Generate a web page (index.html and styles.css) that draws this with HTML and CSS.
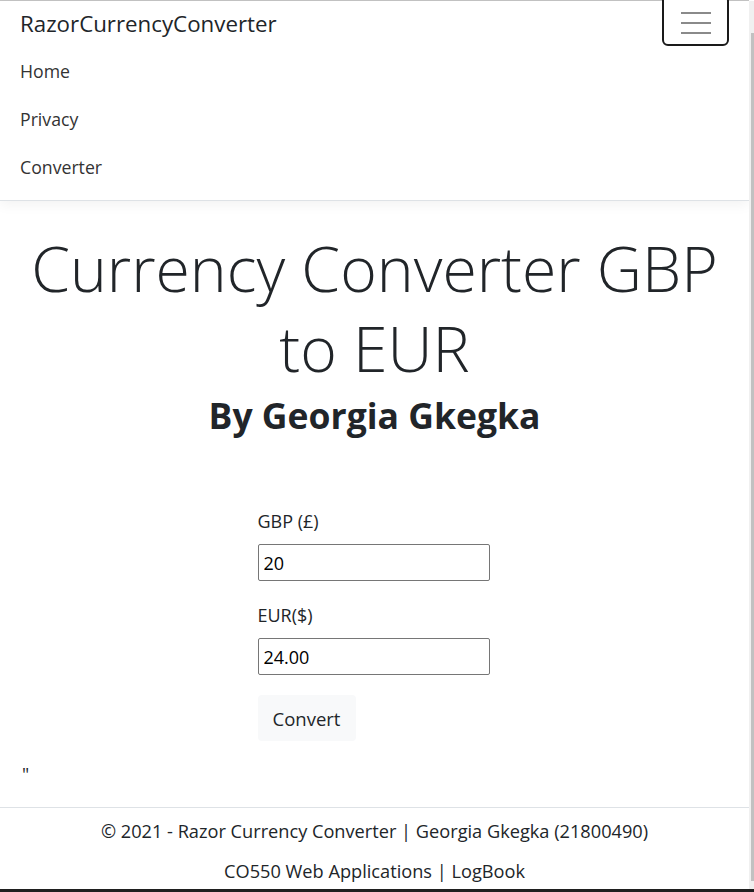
FILE: index.html
```html
<!DOCTYPE html>
<html lang="en">
<head>
<meta charset="utf-8">
<title>RazorCurrencyConverter</title>
<link rel="stylesheet" href="styles.css">
</head>
<body>
<div class="app">
  <header class="navbar">
    <div class="navbar-top">
      <a class="brand" href="#">RazorCurrencyConverter</a>
      <button class="toggler" type="button" aria-label="Toggle navigation">
        <svg width="30" height="24" viewBox="0 0 30 24"><path d="M0 2h30M0 12h30M0 22h30" stroke="#8a8a8a" stroke-width="2"/></svg>
      </button>
    </div>
    <nav class="nav">
      <a class="nav-link" href="#">Home</a>
      <a class="nav-link" href="#">Privacy</a>
      <a class="nav-link" href="#">Converter</a>
    </nav>
  </header>

  <main class="main">
    <h1 class="title">Currency Converter GBP to EUR</h1>
    <h2 class="subtitle">By Georgia Gkegka</h2>

    <form class="form">
      <label class="label" for="gbp">GBP (£)</label>
      <input class="input" id="gbp" type="text" value="20">
      <label class="label" for="eur">EUR($)</label>
      <input class="input" id="eur" type="text" value="24.00">
      <button class="btn" type="button">Convert</button>
    </form>

    <p class="quote">"</p>
  </main>

  <footer class="footer">
    <p class="footer-line">© 2021 - Razor Currency Converter | Georgia Gkegka (21800490)</p>
    <p class="footer-line">CO550 Web Applications | LogBook</p>
  </footer>
</div>
<div class="scrollbar"><div class="thumb"></div></div>
<div class="taskbar"></div>
</body>
</html>
```
FILE: styles.css
```css
* { box-sizing: border-box; }
html, body { margin: 0; padding: 0; }
body {
  font-family: "Open Sans", "Noto Sans", sans-serif;
  color: #212529;
  background: #fff;
  font-size: 18px;
  line-height: 1.5;
  overflow: hidden;
  height: 892px;
}
.app {
  width: 749px;
  border-top: 1px solid #c4c4c4;
}
.navbar {
  border-bottom: 1px solid #dee2e6;
  box-shadow: 0 4px 12px rgba(0,0,0,.05);
  padding: 0 20px 9px 20px;
  background: #fff;
}
.navbar-top {
  display: flex;
  justify-content: space-between;
  align-items: center;
  height: 46px;
}
.brand {
  font-size: 22.3px;
  color: #212529;
  text-decoration: none;
  line-height: 30px;
}
.toggler {
  align-self: flex-start;
  margin-top: -6px;
  width: 67px;
  height: 51px;
  border: 2px solid #1a1a1a;
  border-radius: 6px;
  background: #fff;
  display: flex;
  align-items: center;
  justify-content: center;
  padding: 5px 0 0 0;
}
.nav { display: flex; flex-direction: column; }
.nav-link {
  font-size: 17.7px;
  color: #333;
  text-decoration: none;
  line-height: 24px;
  padding: 12px 0;
}
.main {
  padding: 27px 20px 0 20px;
}
.title {
  margin: 0;
  text-align: center;
  font-weight: 300;
  font-size: 62.5px;
  line-height: 80px;
}
.subtitle {
  margin: 4px 0 0 0;
  text-align: center;
  font-weight: 700;
  font-size: 35.5px;
  line-height: 46px;
}
.form {
  width: 232px;
  margin: 71px auto 0 auto;
  display: flex;
  flex-direction: column;
  align-items: flex-start;
}
.label {
  font-size: 18px;
  line-height: 24px;
  margin-bottom: 11px;
  margin-left: -1px;
}
.input {
  margin-left: -1px;
  width: 232px;
  height: 37px;
  border: 1px solid #767676;
  border-radius: 2px;
  padding: 0 5px;
  font-family: inherit;
  font-size: 18px;
  color: #000;
  margin-bottom: 22px;
}
.btn {
  margin-left: -1px;
  margin-top: -2px;
  height: 46px;
  width: 98px;
  border: none;
  border-radius: 4px;
  background: #f8f9fa;
  font-family: inherit;
  font-size: 18.5px;
  color: #212529;
}
.quote {
  margin: 21px 0 0 2px;
  line-height: 24px;
  color: #212529;
}
.footer {
  margin-top: 21px;
  border-top: 1px solid #dee2e6;
  text-align: center;
  padding-top: 11px;
}
.footer-line {
  font-size: 18.2px;
  margin: 0 0 16px 0;
  line-height: 24px;
}
.scrollbar {
  position: fixed;
  top: 1px;
  right: 0;
  width: 5px;
  height: 888px;
  background: #f0f0f0;
}
.thumb {
  margin: 32px 0 0 2px;
  height: 848px;
  background: #c1c1c1;
}
.taskbar {
  position: fixed;
  left: 0;
  right: 0;
  bottom: 0;
  height: 3px;
  background: #1f1f1f;
}
```
